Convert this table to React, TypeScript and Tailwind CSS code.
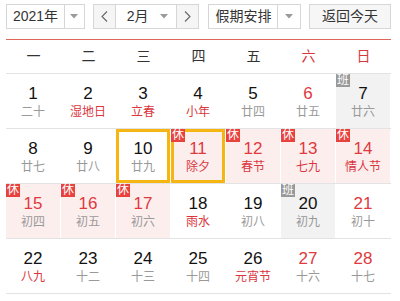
import React from "react";

type Day = {
  n: number;
  lunar: string;
  red?: boolean;
  lunarRed?: boolean;
  bg?: "rest" | "work";
  badge?: "休" | "班";
  box?: boolean;
};

const weeks: Day[][] = [
  [
    { n: 1, lunar: "二十" },
    { n: 2, lunar: "湿地日", lunarRed: true },
    { n: 3, lunar: "立春", lunarRed: true },
    { n: 4, lunar: "小年", lunarRed: true },
    { n: 5, lunar: "廿四" },
    { n: 6, lunar: "廿五", red: true },
    { n: 7, lunar: "廿六", bg: "work", badge: "班" },
  ],
  [
    { n: 8, lunar: "廿七" },
    { n: 9, lunar: "廿八" },
    { n: 10, lunar: "廿九", box: true },
    { n: 11, lunar: "除夕", red: true, lunarRed: true, bg: "rest", badge: "休", box: true },
    { n: 12, lunar: "春节", red: true, lunarRed: true, bg: "rest", badge: "休" },
    { n: 13, lunar: "七九", red: true, lunarRed: true, bg: "rest", badge: "休" },
    { n: 14, lunar: "情人节", red: true, lunarRed: true, bg: "rest", badge: "休" },
  ],
  [
    { n: 15, lunar: "初四", red: true, bg: "rest", badge: "休" },
    { n: 16, lunar: "初五", red: true, bg: "rest", badge: "休" },
    { n: 17, lunar: "初六", red: true, bg: "rest", badge: "休" },
    { n: 18, lunar: "雨水", lunarRed: true },
    { n: 19, lunar: "初八" },
    { n: 20, lunar: "初九", bg: "work", badge: "班" },
    { n: 21, lunar: "初十", red: true },
  ],
  [
    { n: 22, lunar: "八九", lunarRed: true },
    { n: 23, lunar: "十二" },
    { n: 24, lunar: "十三" },
    { n: 25, lunar: "十四" },
    { n: 26, lunar: "元宵节", lunarRed: true },
    { n: 27, lunar: "十六", red: true },
    { n: 28, lunar: "十七", red: true },
  ],
];

const heads = ["一", "二", "三", "四", "五", "六", "日"];

const Caret = () => (
  <svg width="8" height="5" viewBox="0 0 8 5">
    <path d="M0 0h8L4 4.5z" fill="#9a9a9a" />
  </svg>
);

const Chevron = ({ dir }: { dir: "l" | "r" }) => (
  <svg width="7" height="11" viewBox="0 0 7 11">
    <path
      d={dir === "l" ? "M6 0.5L1 5.5l5 5" : "M1 0.5l5 5-5 5"}
      fill="none"
      stroke="#666"
      strokeWidth="1.1"
    />
  </svg>
);

const DayCell: React.FC<{ d: Day }> = ({ d }) => {
  const bg =
    d.bg === "rest" ? "bg-[#fdeeee]" : d.bg === "work" ? "bg-[#f2f2f2]" : "bg-white";
  return (
    <div className="pr-px">
      <div
        className={`relative h-[54px] flex flex-col items-center ${bg} ${
          d.box ? "border-[3px] border-[#f5b614] pt-[7px]" : "pt-[10px]"
        }`}
      >
        {d.badge && (
          <span
            className={`absolute ${d.box ? "-top-[3px] -left-[3px]" : "top-0 left-0"} w-[14px] h-[13px] text-[12px] leading-[13px] text-white text-center ${
              d.badge === "休" ? "bg-[#e8423f]" : "bg-[#999999]"
            }`}
          >
            {d.badge}
          </span>
        )}
        <span
          className={`text-[17px] leading-[20px] ${d.red ? "text-[#e0393e]" : "text-[#111]"}`}
        >
          {d.n}
        </span>
        <span
          className={`text-[12px] leading-[16px] ${
            d.lunarRed ? "text-[#d9363e]" : "text-[#999]"
          }`}
        >
          {d.lunar}
        </span>
      </div>
    </div>
  );
};

export default function App() {
  return (
    <div
      className="w-[400px] h-[301px] bg-white pl-[6px] pr-[9px] pt-[4px] text-[#333]"
      style={{ fontFamily: '"Liberation Sans", "Noto Sans CJK SC", sans-serif' }}
    >
      <div className="flex items-center h-[25px] text-[14px]">
        <div className="flex h-[25px] w-[79px] border border-[#d6d6d6]">
          <div className="w-[57px] flex items-center justify-center">2021年</div>
          <div className="flex-1 border-l border-[#d6d6d6] flex items-center justify-center">
            <Caret />
          </div>
        </div>
        <div className="flex h-[25px] w-[107px] ml-[8px] border border-[#d6d6d6]">
          <div className="w-[22px] bg-[#f5f5f5] border-r border-[#d6d6d6] flex items-center justify-center">
            <Chevron dir="l" />
          </div>
          <div className="flex-1 flex items-center justify-between pl-[11px] pr-[8px]">
            <span>2月</span>
            <Caret />
          </div>
          <div className="w-[22px] bg-[#f5f5f5] border-l border-[#d6d6d6] flex items-center justify-center">
            <Chevron dir="r" />
          </div>
        </div>
        <div className="flex h-[25px] w-[93px] ml-[9px] border border-[#d6d6d6]">
          <div className="w-[68px] flex items-center justify-center">假期安排</div>
          <div className="flex-1 border-l border-[#d6d6d6] flex items-center justify-center">
            <Caret />
          </div>
        </div>
        <div className="flex h-[25px] w-[82px] ml-[8px] border border-[#d6d6d6] bg-[#f6f6f6] items-center justify-center">
          返回今天
        </div>
      </div>
      <div className="mt-[10px] h-px bg-[#e0665c]" />
      <div className="grid grid-cols-7 h-[33px] items-center text-[14px]">
        {heads.map((h, i) => (
          <div key={h} className={`text-center ${i >= 5 ? "text-[#d9363e]" : "text-[#333]"}`}>
            {h}
          </div>
        ))}
      </div>
      {weeks.map((w, i) => (
        <div key={i} className="grid grid-cols-7 border-t border-[#e3e3e3]">
          {w.map((d) => (
            <DayCell key={d.n} d={d} />
          ))}
        </div>
      ))}
      <div className="h-px bg-[#e3e3e3]" />
    </div>
  );
}
